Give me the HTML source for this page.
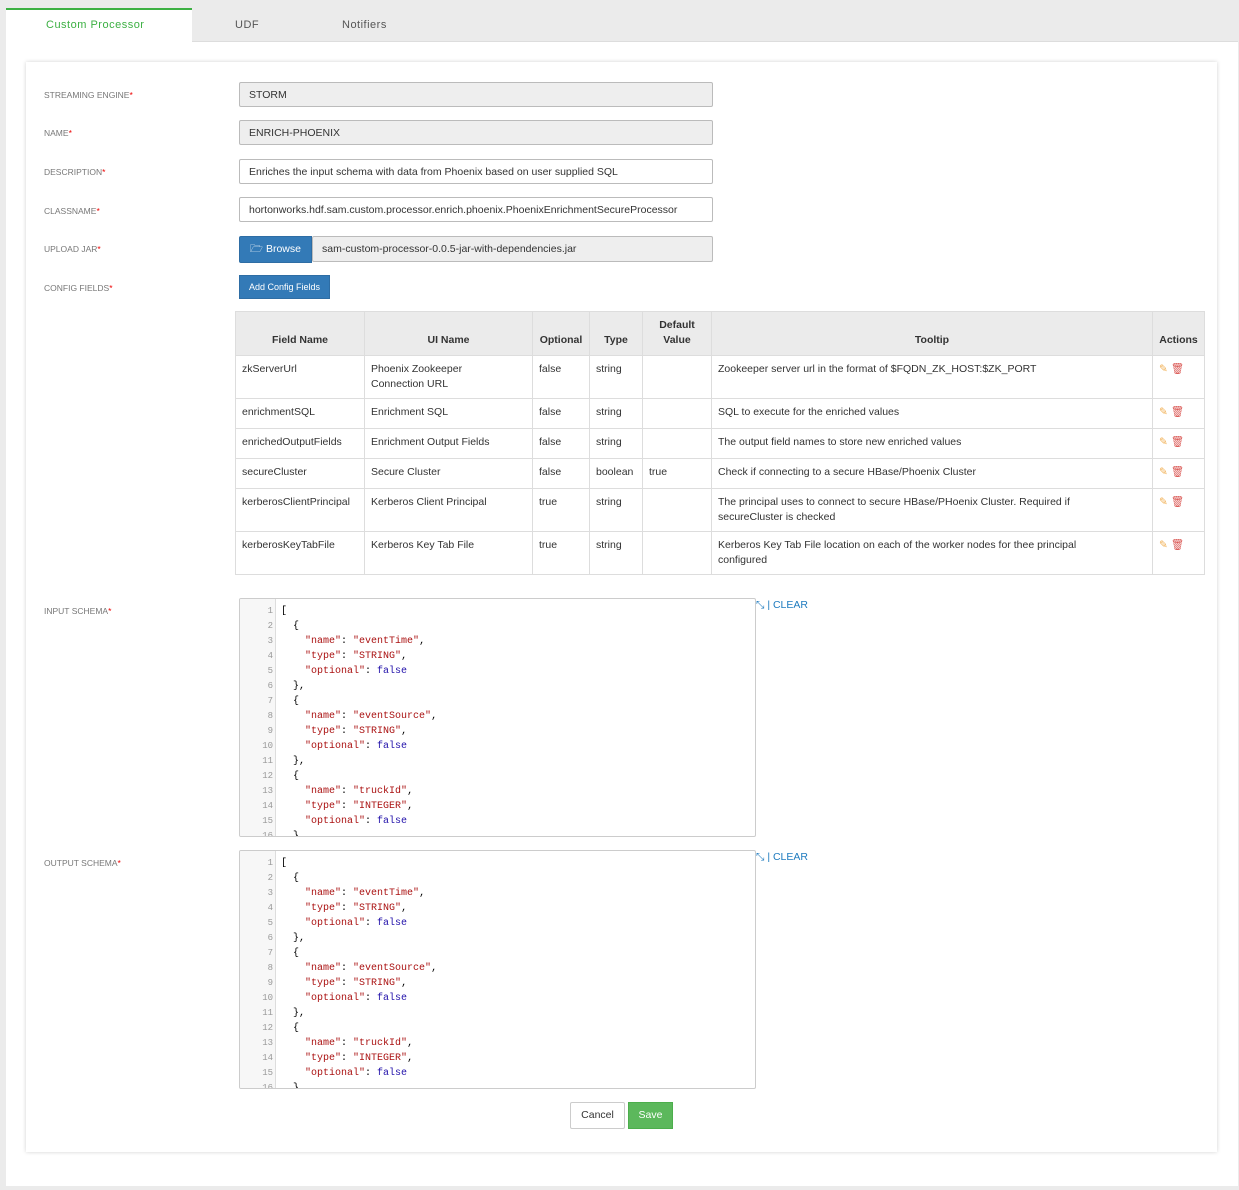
<!DOCTYPE html>
<html><head><meta charset="utf-8"><style>
*{box-sizing:border-box;margin:0;padding:0}
body{width:1239px;height:1190px;background:#ebebeb;font-family:"Liberation Sans",sans-serif;position:relative;overflow:hidden;color:#333}
.abs{position:absolute}
.page{position:absolute;left:6px;top:41px;width:1232px;height:1145px;background:#fff;border-top:1px solid #ddd}
.tab{position:absolute;top:9px;height:34px;font-size:11px;letter-spacing:.5px;line-height:32px;color:#555}
.card{position:absolute;left:26px;top:62px;width:1191px;height:1090px;background:#fff;box-shadow:0 0 4px rgba(0,0,0,.18)}
.lbl{position:absolute;left:44px;font-size:8.5px;color:#777;text-transform:uppercase}
.lbl b{color:#e00;font-weight:normal}
.inp{position:absolute;left:239px;width:474px;height:25px;border:1px solid #bbb;border-radius:2px;font-size:10.5px;line-height:25px;padding-left:9px;padding-right:8px;color:#333;white-space:nowrap;overflow:hidden}
.gray{background:#eee}
table{position:absolute;left:235px;top:311px;border-collapse:collapse;font-size:10.5px}
td,th{border:1px solid #ddd;padding:0 6px;vertical-align:top;line-height:15px}
th{background:#ebebeb;font-weight:bold;text-align:center;vertical-align:bottom;padding-bottom:7px;height:44px;color:#333}
td{padding-top:6px}
.ic{white-space:nowrap}
.ed{position:absolute;left:239px;width:517px;height:239px;border:1px solid #ccc;border-radius:2px;overflow:hidden;font-family:"Liberation Mono",monospace;font-size:10px}
.gut{position:absolute;left:0;top:0;width:36px;height:100%;background:#f7f7f7;border-right:1px solid #ddd}
.ln{position:absolute;left:0;width:33px;text-align:right;color:#999;font-size:9px}
.cd{position:absolute;left:41px;white-space:pre;color:#000}
.s{color:#a11}.k{color:#21a}
.clr{position:absolute;left:756px;font-size:10.5px;color:#1e7bbf}
</style></head><body>
<div class="page"></div>
<div class="abs" style="left:6px;top:8px;width:186px;height:34px;background:#fff;border-top:2px solid #3cb043"></div>
<div class="tab" style="left:46px;color:#3cb043">Custom Processor</div>
<div class="tab" style="left:235px">UDF</div>
<div class="tab" style="left:342px">Notifiers</div>
<div class="card"></div>

<div class="lbl" style="top:90px">Streaming Engine<b>*</b></div>
<div class="lbl" style="top:128px">Name<b>*</b></div>
<div class="lbl" style="top:167px">Description<b>*</b></div>
<div class="lbl" style="top:206px">Classname<b>*</b></div>
<div class="lbl" style="top:244px">Upload Jar<b>*</b></div>
<div class="lbl" style="top:283px">Config Fields<b>*</b></div>
<div class="lbl" style="top:606px">Input Schema<b>*</b></div>
<div class="lbl" style="top:858px">Output Schema<b>*</b></div>

<div class="inp gray" style="top:82px">STORM</div>
<div class="inp gray" style="top:120px">ENRICH-PHOENIX</div>
<div class="inp" style="top:159px">Enriches the input schema with data from Phoenix based on user supplied SQL</div>
<div class="inp" style="top:197px">hortonworks.hdf.sam.custom.processor.enrich.phoenix.PhoenixEnrichmentSecureProcessor</div>
<div class="inp gray" style="top:236px;left:312px;width:401px;height:26px">sam-custom-processor-0.0.5-jar-with-dependencies.jar</div>
<div class="abs" style="left:239px;top:236px;width:73px;height:27px;background:#337ab7;border:1px solid #2e6da4;border-radius:2px 0 0 2px;color:#fff;font-size:10.5px;line-height:25px;text-align:center">&#128449; Browse</div>
<div class="abs" style="left:239px;top:275px;width:91px;height:24px;background:#337ab7;border:1px solid #2e6da4;color:#fff;font-size:9px;line-height:22px;text-align:center">Add Config Fields</div>

<table>
<tr><th style="width:129px">Field Name</th><th style="width:168px">UI Name</th><th style="width:57px">Optional</th><th style="width:53px">Type</th><th style="width:69px">Default<br>Value</th><th style="width:441px">Tooltip</th><th style="width:52px">Actions</th></tr>
<tr style="height:43px"><td>zkServerUrl</td><td>Phoenix Zookeeper<br>Connection URL</td><td>false</td><td>string</td><td></td><td>Zookeeper server url in the format of $FQDN_ZK_HOST:$ZK_PORT</td><td class="ic"><span style="color:#f0ad4e">&#9998;</span> <span style="color:#d9534f">&#128465;</span></td></tr>
<tr style="height:30px"><td>enrichmentSQL</td><td>Enrichment SQL</td><td>false</td><td>string</td><td></td><td>SQL to execute for the enriched values</td><td class="ic"><span style="color:#f0ad4e">&#9998;</span> <span style="color:#d9534f">&#128465;</span></td></tr>
<tr style="height:30px"><td>enrichedOutputFields</td><td>Enrichment Output Fields</td><td>false</td><td>string</td><td></td><td>The output field names to store new enriched values</td><td class="ic"><span style="color:#f0ad4e">&#9998;</span> <span style="color:#d9534f">&#128465;</span></td></tr>
<tr style="height:30px"><td>secureCluster</td><td>Secure Cluster</td><td>false</td><td>boolean</td><td>true</td><td>Check if connecting to a secure HBase/Phoenix Cluster</td><td class="ic"><span style="color:#f0ad4e">&#9998;</span> <span style="color:#d9534f">&#128465;</span></td></tr>
<tr style="height:43px"><td>kerberosClientPrincipal</td><td>Kerberos Client Principal</td><td>true</td><td>string</td><td></td><td>The principal uses to connect to secure HBase/PHoenix Cluster. Required if<br>secureCluster is checked</td><td class="ic"><span style="color:#f0ad4e">&#9998;</span> <span style="color:#d9534f">&#128465;</span></td></tr>
<tr style="height:43px"><td>kerberosKeyTabFile</td><td>Kerberos Key Tab File</td><td>true</td><td>string</td><td></td><td>Kerberos Key Tab File location on each of the worker nodes for thee principal<br>configured</td><td class="ic"><span style="color:#f0ad4e">&#9998;</span> <span style="color:#d9534f">&#128465;</span></td></tr>
</table>

<div class="ed" style="top:598px"><div class="gut"></div>
<div class="ln" style="top:5px;line-height:15px">1<br>2<br>3<br>4<br>5<br>6<br>7<br>8<br>9<br>10<br>11<br>12<br>13<br>14<br>15<br>16</div>
<div class="cd" style="top:5px;line-height:15px">[
  {
    <span class="s">"name"</span>: <span class="s">"eventTime"</span>,
    <span class="s">"type"</span>: <span class="s">"STRING"</span>,
    <span class="s">"optional"</span>: <span class="k">false</span>
  },
  {
    <span class="s">"name"</span>: <span class="s">"eventSource"</span>,
    <span class="s">"type"</span>: <span class="s">"STRING"</span>,
    <span class="s">"optional"</span>: <span class="k">false</span>
  },
  {
    <span class="s">"name"</span>: <span class="s">"truckId"</span>,
    <span class="s">"type"</span>: <span class="s">"INTEGER"</span>,
    <span class="s">"optional"</span>: <span class="k">false</span>
  }</div></div>
<div class="clr" style="top:599px">&#10529; | CLEAR</div>

<div class="ed" style="top:850px"><div class="gut"></div>
<div class="ln" style="top:5px;line-height:15px">1<br>2<br>3<br>4<br>5<br>6<br>7<br>8<br>9<br>10<br>11<br>12<br>13<br>14<br>15<br>16</div>
<div class="cd" style="top:5px;line-height:15px">[
  {
    <span class="s">"name"</span>: <span class="s">"eventTime"</span>,
    <span class="s">"type"</span>: <span class="s">"STRING"</span>,
    <span class="s">"optional"</span>: <span class="k">false</span>
  },
  {
    <span class="s">"name"</span>: <span class="s">"eventSource"</span>,
    <span class="s">"type"</span>: <span class="s">"STRING"</span>,
    <span class="s">"optional"</span>: <span class="k">false</span>
  },
  {
    <span class="s">"name"</span>: <span class="s">"truckId"</span>,
    <span class="s">"type"</span>: <span class="s">"INTEGER"</span>,
    <span class="s">"optional"</span>: <span class="k">false</span>
  }</div></div>
<div class="clr" style="top:851px">&#10529; | CLEAR</div>

<div class="abs" style="left:570px;top:1102px;width:55px;height:27px;border:1px solid #ccc;border-radius:2px;background:#fff;font-size:10.5px;line-height:25px;text-align:center">Cancel</div>
<div class="abs" style="left:628px;top:1102px;width:45px;height:27px;border:1px solid #4cae4c;background:#5cb85c;color:#fff;font-size:10.5px;line-height:25px;text-align:center">Save</div>
</body></html>
